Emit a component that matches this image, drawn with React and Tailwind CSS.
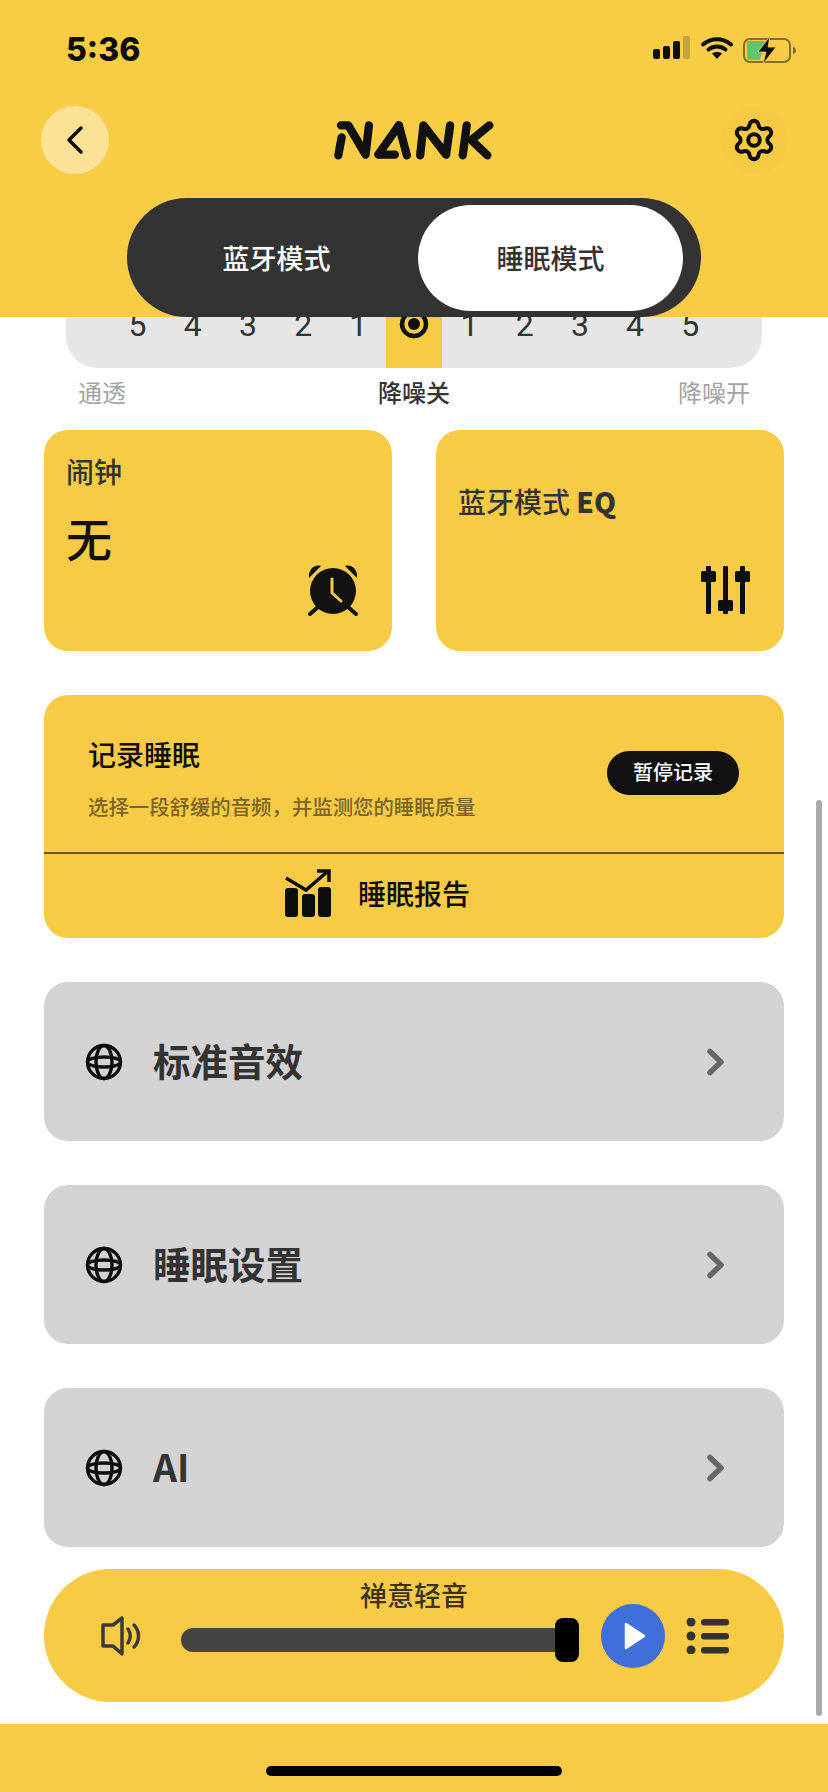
import React from 'react';
import { Settings } from 'lucide-react';

const SignalIcon = () => (
  <svg width="38" height="24" viewBox="0 0 38 24" className="block">
    <rect x="0" y="13" width="7" height="10" rx="2" fill="#0d0d0d" />
    <rect x="10" y="10" width="7" height="13" rx="2" fill="#0d0d0d" />
    <rect x="20" y="5" width="7" height="18" rx="2" fill="#0d0d0d" />
    <rect x="30" y="0" width="7" height="23" rx="2" fill="#0d0d0d" fillOpacity="0.22" />
  </svg>
);

const WifiIcon = () => (
  <svg width="32" height="24" viewBox="0 0 32 24" className="block">
    <path d="M2 8.500C10 1.500 22 1.500 30 8.500" fill="none" stroke="#0d0d0d" strokeWidth="4" strokeLinecap="round" />
    <path d="M7.500 13.500C12.500 9.500 19.500 9.500 24.500 13.500" fill="none" stroke="#0d0d0d" strokeWidth="4" strokeLinecap="round" />
    <path d="M11 17.500C14 15.500 18 15.500 21 17.500L16 23Z" fill="#0d0d0d" />
  </svg>
);

const BatteryIcon = () => (
  <svg width="54" height="28" viewBox="0 0 54 28" className="block">
    <rect x="1" y="3" width="46" height="23" rx="6" fill="none" stroke="#0d0d0d" strokeOpacity="0.5" strokeWidth="2" />
    <path d="M4 7a2 2 0 0 1 2-2h16l-5 19H6a2 2 0 0 1-2-2Z" fill="#5fc46e" />
    <path d="M50 11c2 .5 3 1.700 3 3.500s-1 3-3 3.500Z" fill="#0d0d0d" fillOpacity="0.5" />
    <path d="M27 0 15 16h8l-3 12 13-17h-8Z" fill="#0d0d0d" stroke="#f8cd46" strokeWidth="0.8" />
  </svg>
);

const NankLogo = () => (
  <svg width="163" height="40" viewBox="100 60 490 120" className="block">
    <g fill="none" stroke="#111" strokeWidth="25" strokeLinecap="round" strokeLinejoin="round">
      <path d="M116 166 126 112" />
      <path d="M124 76H146L198 164 208 76" />
      <path d="M298 76 236 164H286" />
      <path d="M298 76 322 166" />
      <path d="M362 166 372 76 440 164 452 76" />
      <path d="M490 166 502 76" />
      <path d="M570 76 516 120 564 166" />
    </g>
  </svg>
);

const AlarmIcon = () => (
  <svg width="52" height="52" viewBox="0 0 52 52" className="block">
    <circle cx="26" cy="27" r="23" fill="#111" />
    <path d="M2 14C1 6 7 0 14 2Z" fill="#111" />
    <path d="M50 14C51 6 45 0 38 2Z" fill="#111" />
    <path d="M11 43 3 50M41 43 49 50" stroke="#111" strokeWidth="4" strokeLinecap="round" />
    <path d="M25 15V29L34 37" fill="none" stroke="#f7cb45" strokeWidth="3" strokeLinecap="round" strokeLinejoin="round" />
  </svg>
);

const EqIcon = () => (
  <svg width="50" height="50" viewBox="0 0 50 50" className="block">
    <g fill="#0d0d0d">
      <rect x="5" y="0" width="5" height="48" rx="1" />
      <rect x="0" y="5" width="15" height="11" rx="1.500" />
      <rect x="22" y="0" width="5" height="48" rx="1" />
      <rect x="17" y="34" width="15" height="11" rx="1.500" />
      <rect x="39" y="0" width="5" height="48" rx="1" />
      <rect x="34" y="5" width="15" height="11" rx="1.500" />
    </g>
  </svg>
);

const ReportIcon = () => (
  <svg width="48" height="48" viewBox="0 0 48 48" className="block">
    <g fill="#0d0d0d">
      <rect x="1" y="19" width="13" height="29" rx="3" />
      <rect x="18" y="25" width="13" height="23" rx="3" />
      <rect x="34" y="18" width="13" height="30" rx="3" />
    </g>
    <path d="M2 9 22 21 43 3" fill="none" stroke="#0d0d0d" strokeWidth="3.500" />
    <path d="M33 2H45V13" fill="none" stroke="#0d0d0d" strokeWidth="3.500" />
  </svg>
);

const GlobeIcon = () => (
  <svg width="38" height="38" viewBox="0 0 38 38" className="block">
    <g fill="none" stroke="#0d0d0d" strokeWidth="3.400">
      <circle cx="19" cy="19" r="16.500" />
      <ellipse cx="19" cy="19" rx="8" ry="16.500" />
      <ellipse cx="19" cy="19" rx="16.500" ry="5" />
    </g>
  </svg>
);

const SpeakerIcon = () => (
  <svg width="42" height="40" viewBox="0 0 42 40" className="block">
    <path d="M3 9H13L22 2V38L13 30H3Z" fill="none" stroke="#3a3a3a" strokeWidth="3.500" strokeLinejoin="round" />
    <path d="M28 13C31 17 31 23 28 27" fill="none" stroke="#3a3a3a" strokeWidth="3.500" strokeLinecap="round" />
    <path d="M34 9C40 15 40 25 34 31" fill="none" stroke="#3a3a3a" strokeWidth="3.500" strokeLinecap="round" />
  </svg>
);

const ListIcon = () => (
  <svg width="44" height="36" viewBox="0 0 44 36" className="block">
    <g fill="#333">
      <circle cx="5" cy="4" r="4.500" />
      <rect x="15" y="1" width="28" height="6.500" rx="3" />
      <circle cx="5" cy="18" r="4.500" />
      <rect x="15" y="15" width="28" height="6.500" rx="3" />
      <circle cx="5" cy="32" r="4.500" />
      <rect x="15" y="29" width="28" height="6.500" rx="3" />
    </g>
  </svg>
);

const MenuCard = ({ title }) => (
  <div className="h-[159px] rounded-[24px] bg-[#d3d3d3] flex items-center pl-[41px] pr-[58px]">
    <GlobeIcon />
    <span className="ml-[30px] -mt-[4px] text-[37.500px] leading-[48px] font-bold text-[#333]">{title}</span>
    <svg width="22" height="32" viewBox="0 0 22 32" className="block ml-auto">
      <path d="M6 5.500 17 16 6 26.500" fill="none" stroke="#666" strokeWidth="5.500" strokeLinecap="round" strokeLinejoin="round" />
    </svg>
  </div>
);

const levels = [5, 4, 3, 2, 1];

const App = () => {
  return (
    <div className="relative w-[828px] h-[1792px] overflow-hidden bg-white flex flex-col font-['Noto_Sans_CJK_SC','Roboto',sans-serif]">
      {/* Header */}
      <div className="relative z-10 h-[317px] shrink-0 bg-[#f8cd46]">
        <div className="h-[106px] pl-[66px] pr-[31px] pt-[30px] flex items-start justify-between">
          <span className="text-[32px] leading-[40px] font-extrabold text-[#0d0d0d] font-['Inter',sans-serif]">5:36</span>
          <div className="flex items-start gap-[10px] pt-[6px]">
            <SignalIcon />
            <WifiIcon />
            <BatteryIcon />
          </div>
        </div>
        <div className="h-[68px] pl-[41px] pr-[40px] flex items-center justify-between">
          <div className="w-[68px] h-[68px] rounded-full bg-[#fbe297] flex items-center justify-center">
            <svg width="20" height="30" viewBox="0 0 20 30">
              <path d="M16 3 4 15 16 27" fill="none" stroke="#0d0d0d" strokeWidth="3.500" strokeLinecap="round" strokeLinejoin="round" />
            </svg>
          </div>
          <NankLogo />
          <div className="w-[68px] h-[68px] rounded-full bg-[#f7ca44] flex items-center justify-center">
            <Settings size={46} strokeWidth={2.1} color="#0d0d0d" />
          </div>
        </div>
        <div className="mt-[24px] ml-[127px] w-[574px] h-[119px] rounded-full bg-[#333] pt-[7px] pb-[6px] pr-[18px] flex justify-between">
          <div className="flex-1 pl-[8px] flex items-center justify-center text-[27px] font-medium text-white">蓝牙模式</div>
          <div className="w-[265px] rounded-full bg-white flex items-center justify-center text-[27px] font-medium text-[#333]">睡眠模式</div>
        </div>
      </div>

      <div className="flex-1 px-[44px]">
        {/* Noise control */}
        <div className="mx-[22px] h-[51px] rounded-b-[32px] bg-[#e6e6e6] overflow-hidden flex pl-[44px] text-[32px] leading-[40px] text-[#333] font-['Roboto',sans-serif]">
          {levels.map((n) => (
            <span key={`l${n}`} className="w-[55.200px] -mt-[12px] text-center">{n}</span>
          ))}
          <div className="w-[56px] bg-[#f7cb45] flex justify-center">
            <svg width="30" height="30" viewBox="0 0 30 30" className="-mt-[8px]">
              <circle cx="15" cy="15" r="12" fill="none" stroke="#111" strokeWidth="4.500" />
              <circle cx="15" cy="15" r="6" fill="#111" />
            </svg>
          </div>
          {[...levels].reverse().map((n) => (
            <span key={`r${n}`} className="w-[55.200px] -mt-[12px] text-center">{n}</span>
          ))}
        </div>
        <div className="mt-[6px] mx-[34px] grid grid-cols-3 text-[24px] leading-[36px]">
          <span className="text-[#a3a3a3]">通透</span>
          <span className="text-center font-medium text-[#333]">降噪关</span>
          <span className="text-right text-[#a3a3a3]">降噪开</span>
        </div>

        {/* Alarm + EQ */}
        <div className="mt-[20px] grid grid-cols-2 gap-[44px]">
          <div className="h-[221px] rounded-[24px] bg-[#f7cb45] pl-[22px] pr-[33px] pt-[22px] flex flex-col">
            <span className="text-[28px] leading-[38px] font-medium text-[#333]">闹钟</span>
            <span className="mt-[17px] text-[46px] leading-[60px] font-medium text-[#111]">无</span>
            <div className="mt-[-3px] self-end"><AlarmIcon /></div>
          </div>
          <div className="h-[221px] rounded-[24px] bg-[#f7cb45] pl-[22px] pr-[33px] pt-[51px] flex flex-col">
            <span className="text-[28px] leading-[40px] font-medium text-[#333]">蓝牙模式 <span className="font-black">EQ</span></span>
            <div className="mt-[45px] self-end"><EqIcon /></div>
          </div>
        </div>

        {/* Sleep record */}
        <div className="mt-[44px] h-[243px] rounded-[24px] bg-[#f7cb45] overflow-hidden flex flex-col">
          <div className="h-[159px] shrink-0 pl-[44px] pr-[45px] flex items-start justify-between border-b-2 border-[#6e5114]">
            <div className="pt-[40px]">
              <div className="text-[28px] leading-[38px] font-medium text-[#0d0d0d]">记录睡眠</div>
              <div className="mt-[19px] text-[20.400px] leading-[28px] font-medium text-[#7a6428]">选择一段舒缓的音频，并监测您的睡眠质量</div>
            </div>
            <div className="mt-[56px] w-[132px] h-[44px] rounded-full bg-[#111] flex items-center justify-center text-[20px] leading-[40px] pb-[2px] font-medium text-white">暂停记录</div>
          </div>
          <div className="flex-1 pl-[240px] flex items-center gap-[26px]">
            <div className="-mt-[6px]"><ReportIcon /></div>
            <span className="-mt-[6px] text-[28px] leading-[38px] font-medium text-[#0d0d0d]">睡眠报告</span>
          </div>
        </div>

        {/* Settings rows */}
        <div className="mt-[44px] flex flex-col gap-[44px]">
          <MenuCard title="标准音效" />
          <MenuCard title="睡眠设置" />
          <MenuCard title="AI" />
        </div>

        {/* Player */}
        <div className="mt-[22px] h-[133px] rounded-full bg-[#f7cb45] pt-[12px] flex flex-col">
          <div className="text-center text-[27px] leading-[28px] font-medium text-[#3a3320]">禅意轻音</div>
          <div className="-mt-[5px] pl-[56px] flex items-center">
            <SpeakerIcon />
            <div className="ml-[39px] mt-[8px] w-[398px] h-[44px] flex items-center">
              <div className="flex-1 h-[24px] rounded-l-full bg-[#444]" />
              <div className="w-[24px] h-[44px] rounded-[8px] bg-black" />
            </div>
            <div className="ml-[22px] w-[64px] h-[64px] rounded-full bg-[#3f6fd8] flex items-center justify-center">
              <svg width="24" height="30" viewBox="0 0 24 30" className="ml-[4px]">
                <path d="M3 3 21 15 3 27Z" fill="#fff" stroke="#fff" strokeWidth="2.500" strokeLinejoin="round" />
              </svg>
            </div>
            <div className="ml-[21px]"><ListIcon /></div>
          </div>
        </div>
      </div>

      {/* Bottom bar */}
      <div className="h-[68px] shrink-0 bg-[#f7cb45] flex justify-center pt-[42px]">
        <div className="w-[296px] h-[10px] rounded-full bg-black" />
      </div>

      {/* Scrollbar */}
      <div className="absolute left-[816px] top-[800px] w-[6px] h-[916px] rounded-full bg-[#aaa]" />
    </div>
  );
};

export default App;
